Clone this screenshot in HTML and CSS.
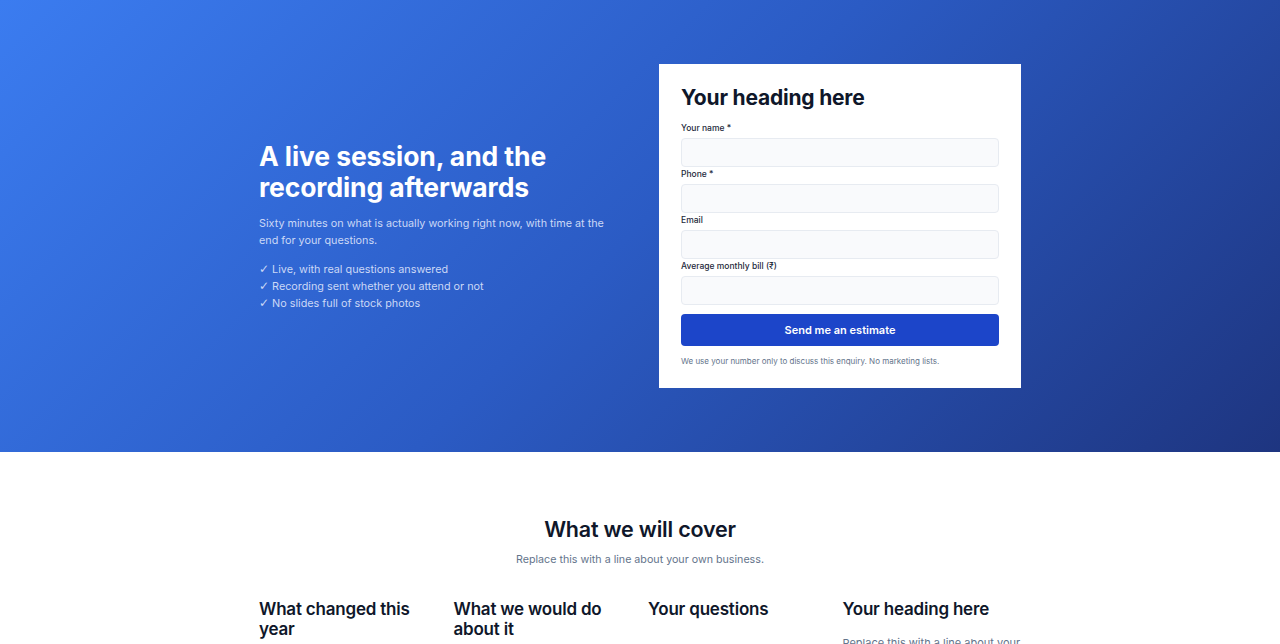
FILE: index.html
```html
<!DOCTYPE html>
<html lang="en">
<head>
<meta charset="utf-8">
<title>Live session</title>
<link rel="stylesheet" href="styles.css">
</head>
<body>
<section class="hero">
  <div class="container hero-grid">
    <div class="hero-copy">
      <h1>A live session, and the recording afterwards</h1>
      <p class="lead">Sixty minutes on what is actually working right now, with time at the end for your questions.</p>
      <ul class="checks">
        <li><span class="tick">✓</span> Live, with real questions answered</li>
        <li><span class="tick">✓</span> Recording sent whether you attend or not</li>
        <li><span class="tick">✓</span> No slides full of stock photos</li>
      </ul>
    </div>
    <form class="card">
      <h2>Your heading here</h2>
      <label class="field"><span>Your name *</span><input type="text"></label>
      <label class="field"><span>Phone *</span><input type="tel"></label>
      <label class="field"><span>Email</span><input type="email"></label>
      <label class="field"><span>Average monthly bill (₹)</span><input type="text"></label>
      <button type="button" class="btn">Send me an estimate</button>
      <p class="note">We use your number only to discuss this enquiry. No marketing lists.</p>
    </form>
  </div>
</section>
<section class="cover">
  <div class="container">
    <h2 class="section-title">What we will cover</h2>
    <p class="section-sub">Replace this with a line about your own business.</p>
    <div class="cols">
      <div class="col"><h3>What changed this year</h3><p>Replace this with a line about your own business.</p></div>
      <div class="col"><h3>What we would do about it</h3><p>Replace this with a line about your own business.</p></div>
      <div class="col"><h3>Your questions</h3></div>
      <div class="col"><h3>Your heading here</h3><p>Replace this with a line about your own business.</p></div>
    </div>
  </div>
</section>
</body>
</html>
```
FILE: styles.css
```css
* { box-sizing: border-box; }
html, body { margin: 0; padding: 0; }
body {
  font-family: Inter, "Liberation Sans", sans-serif;
  color: #0f172a;
  background: #fff;
}
.container {
  width: 762px;
  margin: 0 auto;
}
.hero {
  background: linear-gradient(135deg, #3b7cf0 0%, #2b5bc4 50%, #1e3580 100%);
  padding: 64px 0;
}
.hero-grid {
  display: grid;
  grid-template-columns: 1fr 362px;
  gap: 38px;
  align-items: center;
}
.hero-copy h1 {
  margin: 0 0 12px;
  font-size: 26.5px;
  line-height: 31px;
  font-weight: 700;
  color: #fff;
  letter-spacing: -0.1px;
}
.lead {
  margin: 0 0 12px;
  font-size: 10.8px;
  line-height: 17px;
  color: #cbd8f6;
}
.checks {
  list-style: none;
  margin: 0;
  padding: 0;
  font-size: 10.8px;
  line-height: 17px;
  color: #cbd8f6;
}
.tick {
  font-family: "DejaVu Sans", sans-serif;
  font-size: 12px;
  line-height: 10px;
}
.card {
  background: #fff;
  padding: 21px 22px 22px;
  display: flex;
  flex-direction: column;
}
.card h2 {
  margin: 0 0 12px;
  font-size: 21px;
  line-height: 26px;
  font-weight: 700;
  color: #0f172a;
  letter-spacing: -0.2px;
}
.field {
  display: flex;
  flex-direction: column;
}
.field span {
  font-size: 8.5px;
  line-height: 11px;
  font-weight: 500;
  color: #1e293b;
  margin-bottom: 4px;
}
.field input {
  height: 29px;
  border: 1px solid #e7ebf1;
  border-radius: 4px;
  background: #f9fafc;
  margin: 0 0 2px;
  font: inherit;
}
.btn {
  margin-top: 7px;
  height: 32px;
  border: 0;
  border-radius: 4px;
  background: #1c45c9;
  color: #fff;
  font-family: inherit;
  font-size: 11px;
  font-weight: 600;
}
.note {
  margin: 10px 0 0;
  font-size: 8px;
  line-height: 10px;
  color: #64748b;
}
.cover {
  padding: 63px 0 40px;
}
.section-title {
  margin: 0;
  text-align: center;
  font-size: 21.5px;
  line-height: 28px;
  font-weight: 600;
  color: #0f172a;
  letter-spacing: -0.2px;
}
.section-sub {
  margin: 10px 0 0;
  text-align: center;
  font-size: 10.7px;
  line-height: 14px;
  color: #64748b;
}
.cols {
  margin-top: 32px;
  display: grid;
  grid-template-columns: repeat(4, 1fr);
  gap: 16px;
}
.col h3 {
  margin: 0 0 16px;
  font-size: 17px;
  line-height: 20px;
  font-weight: 600;
  color: #0f172a;
  letter-spacing: -0.2px;
}
.col p {
  margin: 0;
  font-size: 11px;
  line-height: 16px;
  color: #64748b;
}
```
